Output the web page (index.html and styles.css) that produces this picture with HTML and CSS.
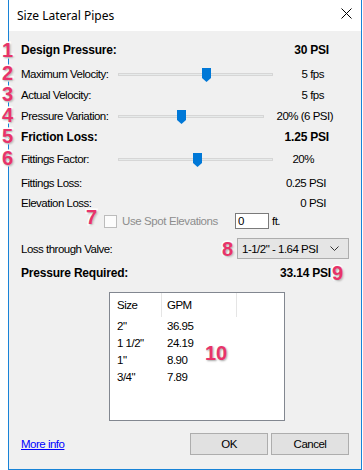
FILE: index.html
```html
<!DOCTYPE html>
<html lang="en">
<head>
  <meta charset="UTF-8" />
  <title>Size Lateral Pipes</title>
  <link rel="stylesheet" href="styles.css">
</head>
<body>

  <div class="window">
    <div class="title-bar">
      <span class="title">Size Lateral Pipes</span>
      <svg class="close" width="11" height="11" viewBox="0 0 11 11">
        <path d="M0.5 0.5 L10.5 10.5 M10.5 0.5 L0.5 10.5" stroke="#000" stroke-width="1" fill="none" />
      </svg>
    </div>

    <div class="content">
      <div class="row r1 bold">
        <span class="label">Design Pressure:</span>
        <span class="value">30 PSI</span>
      </div>

      <div class="row r2">
        <span class="label">Maximum Velocity:</span>
        <div class="slider"><div class="track"></div><div class="thumb thumb-max"></div></div>
        <span class="value v-fps">5 fps</span>
      </div>

      <div class="row">
        <span class="label">Actual Velocity:</span>
        <span class="value v-fps">5 fps</span>
      </div>

      <div class="row">
        <span class="label">Pressure Variation:</span>
        <div class="slider slider-short"><div class="track"></div><div class="thumb thumb-var"></div></div>
        <span class="value v-wide">20% (6 PSI)</span>
      </div>

      <div class="row bold">
        <span class="label">Friction Loss:</span>
        <span class="value">1.25 PSI</span>
      </div>

      <div class="row r6">
        <span class="label">Fittings Factor:</span>
        <div class="slider"><div class="track"></div><div class="thumb thumb-fit"></div></div>
        <span class="value v-pct">20%</span>
      </div>

      <div class="row r7">
        <span class="label">Fittings Loss:</span>
        <span class="value v-loss">0.25 PSI</span>
      </div>

      <div class="row r8">
        <span class="label">Elevation Loss:</span>
        <span class="value v-loss">0 PSI</span>
      </div>

      <div class="row check-row">
        <span class="checkbox"></span>
        <span class="check-label">Use Spot Elevations</span>
        <span class="textbox">0</span>
        <span class="unit">ft.</span>
      </div>

      <div class="row valve-row">
        <span class="label">Loss through Valve:</span>
        <div class="dropdown">
          <span>1-1/2" - 1.64 PSI</span>
          <svg width="9" height="5" viewBox="0 0 9 5">
            <path d="M0.5 0.5 L4.5 4.5 L8.5 0.5" stroke="#333" stroke-width="1" fill="none" />
          </svg>
        </div>
      </div>

      <div class="row required-row bold">
        <span class="label">Pressure Required:</span>
        <span class="value v-req">33.14 PSI</span>
      </div>

      <div class="list-view">
        <div class="list-head">
          <span class="col-size">Size</span>
          <span class="col-gpm">GPM</span>
        </div>
        <div class="list-row"><span class="col-size">2"</span><span class="col-gpm">36.95</span></div>
        <div class="list-row"><span class="col-size">1 1/2"</span><span class="col-gpm">24.19</span></div>
        <div class="list-row"><span class="col-size">1"</span><span class="col-gpm">8.90</span></div>
        <div class="list-row"><span class="col-size">3/4"</span><span class="col-gpm">7.89</span></div>
      </div>

      <div class="footer">
        <a class="more-info" href="#">More info</a>
        <button class="btn">OK</button>
        <button class="btn">Cancel</button>
      </div>
    </div>
  </div>

  <!-- numbered callouts drawn over the dialog -->
  <span class="badge b1">1</span>
  <span class="badge b2">2</span>
  <span class="badge b3">3</span>
  <span class="badge b4">4</span>
  <span class="badge b5">5</span>
  <span class="badge b6">6</span>
  <span class="badge b7">7</span>
  <span class="badge b8">8</span>
  <span class="badge b9">9</span>
  <span class="badge b10">10</span>

</body>
</html>
```

FILE: styles.css
```css
body {
  margin: 0;
  background-color: #ffffff;
  font-family: "Liberation Sans", Arial, sans-serif;
  font-size: 11.5px;
  color: #000000;
  position: relative;
  height: 470px;
  overflow: hidden;
}

.window {
  margin-left: 8px;
  width: 354px;
  height: 470px;
  box-sizing: border-box;
  border: 1px solid #1883d7;
  border-top: none;
  background-color: #f0f0f0;
}

.title-bar {
  height: 31px;
  background-color: #ffffff;
  display: flex;
  align-items: center;
  justify-content: space-between;
  padding: 0 9px 0 8px;
}

.title {
  font-family: "Noto Sans", "Open Sans", sans-serif;
  font-size: 12px;
  margin-top: -1px;
}

.close {
  margin-top: -4px;
}

.content {
  padding: 8px 12px 0 12px;
  letter-spacing: -0.5px;
}

.row {
  display: flex;
  align-items: center;
  height: 21px;
}

.bold {
  font-weight: bold;
  font-size: 12px;
  letter-spacing: -0.2px;
}

.label {
  width: 97px;
  flex-shrink: 0;
  white-space: nowrap;
}

.value {
  margin-left: auto;
  margin-right: 20px;
  white-space: nowrap;
}

.v-fps { margin-right: 25px; }
.v-wide { margin-right: 16px; }
.v-pct { margin-right: 35px; }
.v-loss { margin-right: 23px; }
.v-req { margin-right: 18px; }

.r2 { margin-top: 3px; }
.r6 { margin-top: 1px; }
.r7 { margin-top: 3px; }
.r8 { margin-top: -1px; }

.slider {
  position: relative;
  width: 155px;
  height: 21px;
  flex-shrink: 0;
}

.slider-short {
  width: 146px;
}

.track {
  position: absolute;
  left: 0;
  right: 0;
  top: 10px;
  height: 1px;
  border: 1px solid #d6d6d6;
  background-color: #e7eaea;
}

.thumb {
  position: absolute;
  top: 5px;
  width: 9px;
  height: 14px;
  background-color: #0078d7;
  clip-path: polygon(0 0, 100% 0, 100% 72%, 50% 100%, 0 72%);
}

.thumb-max { left: 84px; }
.thumb-var { left: 59px; }
.thumb-fit { left: 75px; }

.check-row {
  height: 18px;
  margin-top: -1px;
}

.checkbox {
  width: 11px;
  height: 11px;
  margin-left: 83px;
  border: 1px solid #bcbcbc;
  background-color: #fcfcfc;
}

.check-label {
  margin-left: 5px;
  color: #8d8d8d;
  letter-spacing: -0.4px;
}

.textbox {
  margin-left: 17px;
  width: 30px;
  height: 14px;
  line-height: 14px;
  padding-left: 2px;
  border: 1px solid #7a7a7a;
  background-color: #ffffff;
}

.unit {
  margin-left: 3px;
}

.valve-row {
  margin-top: 8px;
}

.dropdown {
  margin-left: auto;
  height: 19px;
  border: 1px solid #adadad;
  background-color: #e5e5e5;
  display: flex;
  align-items: center;
  justify-content: space-between;
  padding: 0 9px 0 4px;
  width: 97px;
}

.required-row {
  margin-top: 3px;
}

.list-view {
  margin: 9px 0 0 88px;
  width: 174px;
  height: 127px;
  border: 1px solid #828790;
  background-color: #ffffff;
}

.list-head {
  display: flex;
  height: 24px;
  align-items: center;
  background-image:
    linear-gradient(#e5e5e5, #e5e5e5),
    linear-gradient(#e5e5e5, #e5e5e5);
  background-size: 1px 24px, 1px 24px;
  background-position: 51px 0, 126px 0;
  background-repeat: no-repeat;
}

.list-row {
  display: flex;
  height: 17px;
  align-items: center;
}

.col-size {
  width: 50px;
  padding-left: 7px;
}

.footer {
  display: flex;
  align-items: center;
  margin-top: 12px;
}

.more-info {
  color: #0000ff;
  text-decoration: underline;
  margin-right: auto;
}

.btn {
  width: 78px;
  height: 22px;
  margin-left: 3px;
  border: 1px solid #adadad;
  background-color: #e1e1e1;
  font-family: "Liberation Sans", Arial, sans-serif;
  font-size: 11.5px;
  letter-spacing: -0.5px;
  padding: 0;
  color: #000000;
}

.badge {
  position: absolute;
  font-family: "Liberation Sans", Arial, sans-serif;
  font-weight: bold;
  font-size: 20px;
  line-height: 16px;
  color: #e8336a;
  -webkit-text-stroke: 3px #ffffff;
  paint-order: stroke fill;
  text-shadow: 1px 1px 2px rgba(0, 0, 0, 0.35);
}

.b1 { left: 2px; top: 42px; }
.b2 { left: 2px; top: 65px; }
.b3 { left: 2px; top: 86px; }
.b4 { left: 2px; top: 107px; }
.b5 { left: 2px; top: 128px; }
.b6 { left: 2px; top: 150px; }
.b7 { left: 86px; top: 209px; }
.b8 { left: 222px; top: 241px; }
.b9 { left: 332px; top: 265px; }
.b10 { left: 205px; top: 345px; }
```
